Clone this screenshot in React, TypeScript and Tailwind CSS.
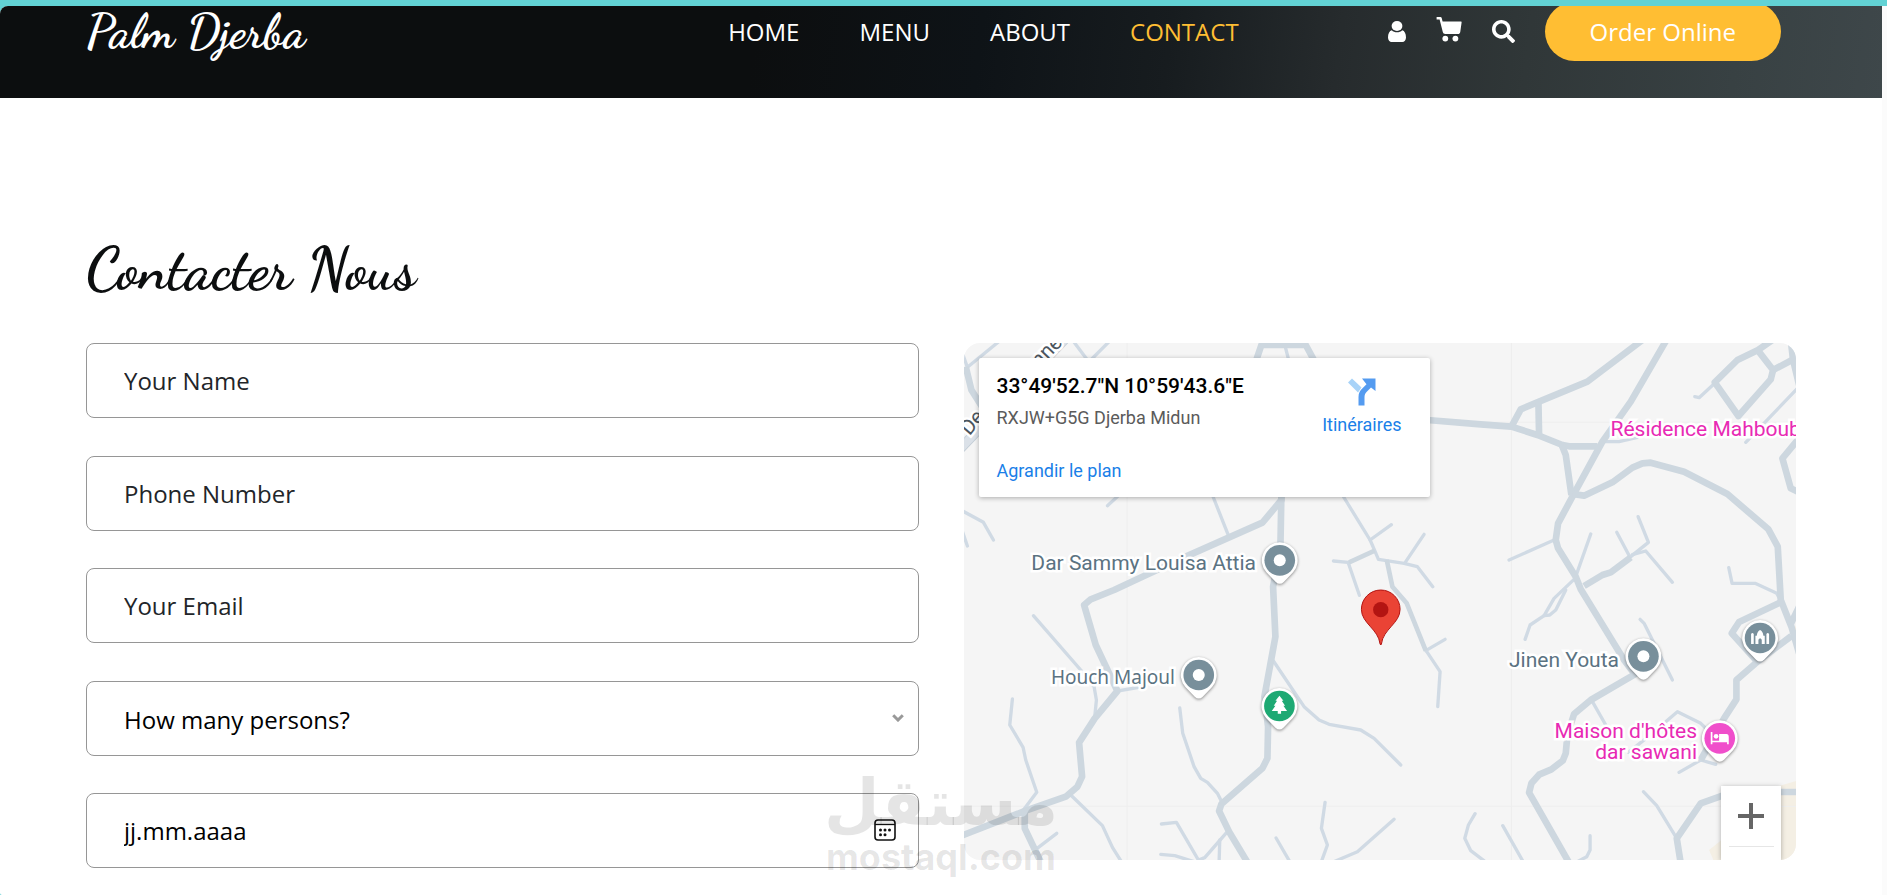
import { FaSearch } from "react-icons/fa";

const NAV = ["HOME", "MENU", "ABOUT", "CONTACT"];

const FIELD =
  "h-[75px] w-full rounded-lg border border-[#969696] bg-transparent px-[37px] text-2xl outline-none placeholder:text-[#222529]";

const MAJOR_ROADS = [
  "M915 95 L932 45 L1065 45 L1092 95",
  "M992 490 L992 510 L935 578 L705 680 L575 740 L490 780 L420 808 L400 825 L435 945 L500 1083 L432 1165 L385 1238 L394 1340 L380 1370 L345 1400 L225 1442 L20 1522",
  "M992 490 L989 650 L967 770 L974 920 L941 1100 L952 1190 L950 1285 L935 1315 L812 1422 L805 1443 L835 1505 L892 1600",
  "M1430 270 L1590 283 L1682 290 L1760 315 L1835 345 L1855 349 L1940 349",
  "M1682 290 L1710 238 L1765 215 L1910 155 L2075 30",
  "M1763 215 L1765 315",
  "M2150 25 L2040 215 L1955 335 L1865 500 L1822 580 L1815 630 L1822 655 L1875 740 L1890 778 L2020 990 L2052 1033 L1920 1110 L1870 1152 L1850 1215 L1845 1270 L1836 1292 L1802 1318 L1765 1334 L1742 1360 L1735 1388 L1856 1600",
  "M1833 345 L1845 375 L1862 495",
  "M1865 492 L1900 497 L1985 457 L2045 413 L2075 400 L2100 398 L2200 425 L2330 492 L2453 598 L2481 650 L2490 810 L2522 890 L2545 970",
  "M2465 30 L2422 60 L2360 90 L2292 157 L2363 258 L2460 148 L2467 120 L2422 62",
  "M2467 120 L2535 84",
  "M2520 30 L2527 90 L2545 165",
  "M2545 325 L2495 385 L2520 475 L2545 487",
  "M1900 768 L1955 735 L1980 727 L2040 682",
  "M2487 818 L2365 876 L2343 910 L2415 990",
  "M2522 918 L2420 995 L2357 1050 L2357 1108 L2320 1165 L2250 1290",
  "M2520 882 L2545 830",
  "M2545 1386 L2400 1386 L2315 1397 L2250 1420 L2178 1525 L2190 1600",
  "M45 110 L62 180 L100 240",
  "M222 1440 L222 1495 L272 1600",
];

const MINOR_ROADS = [
  "M150 30 L50 112 L35 70",
  "M365 30 L410 90",
  "M480 30 L420 90",
  "M1003 48 L1015 95",
  "M505 495 L470 527",
  "M785 495 L832 614",
  "M30 540 L98 577 L128 630",
  "M30 590 L50 648",
  "M248 857 L390 1020 L430 1070 L437 1110 L432 1160",
  "M500 1083 L560 1073",
  "M185 1107 L177 1185 L217 1252 L225 1290 L258 1387 L218 1440",
  "M262 1553 L318 1510",
  "M360 1395 L455 1487 L485 1552 L515 1600",
  "M687 1134 L696 1210 L730 1310 L750 1345 L770 1357 L800 1390 L815 1420",
  "M968 993 L1060 1130 L1105 1170 L1135 1183 L1230 1200 L1270 1225 L1350 1305",
  "M632 1482 L677 1477 L743 1590 L762 1583 L828 1507",
  "M807 1530 L805 1600",
  "M630 1573 L672 1577 L730 1595",
  "M976 1524 L1020 1600",
  "M1123 1417 L1112 1495 L1130 1545 L1110 1600",
  "M1150 1595 L1220 1565 L1330 1468",
  "M1175 495 L1258 630 L1272 662 L1283 688 L1360 700 L1400 710 L1446 770",
  "M1258 630 L1322 584",
  "M1148 693 L1192 697 L1226 796",
  "M1363 698 L1420 613",
  "M1425 962 L1483 928",
  "M1428 965 L1468 1025 L1461 1130",
  "M2292 160 L2245 203 L2232 200",
  "M2545 170 L2385 337",
  "M1960 335 L2005 335 L2060 322",
  "M1675 690 L1810 630",
  "M1920 612 L1873 745 L1810 805 L1780 857 L1738 885 L1723 928",
  "M1845 780 L1815 840 L1797 855 L1780 857",
  "M2040 680 L2093 637 L2062 560",
  "M2037 680 L1998 607",
  "M2045 674 L2085 663 L2165 757",
  "M2334 713 L2344 760 L2413 760 L2478 790 L2490 812",
  "M2068 868 L2080 880 L2165 1050",
  "M1925 1115 L1965 1185",
  "M2145 1175 L2180 1145 L2250 1180 L2270 1200",
  "M2033 1267 L2082 1228",
  "M2185 1327 L2250 1290 L2295 1303",
  "M2078 1385 L2118 1427 L2178 1525",
  "M1573 1451 L1553 1485 L1542 1525 L1560 1562 L1610 1600",
  "M1656 1487 L1720 1600",
  "M1918 1517 L1918 1560 L1908 1580 L1880 1595",
];

const LABEL =
  "absolute text-right leading-[21px] whitespace-nowrap [-webkit-text-stroke:5px_#ffffff] [paint-order:stroke_fill]";

function UserIcon() {
  return (
    <svg viewBox="0 0 18 21" className="h-[21px] w-[18px]" fill="currentColor" aria-hidden="true">
      <ellipse cx="9" cy="5" rx="5.4" ry="5" />
      <path d="M3.8 9.2C5 10.600 7 11.300 9 11.300s4-.7 5.200-2.100C16.600 9.800 18 12.600 18 16.500c0 2.700-1.600 4.500-3.700 4.500H3.700C1.600 21 0 19.200 0 16.500c0-3.900 1.400-6.700 3.800-7.300z" />
    </svg>
  );
}

function CartIcon() {
  return (
    <svg viewBox="0 0 26 25" className="-mt-1 h-[25px] w-[26px]" fill="currentColor" aria-hidden="true">
      <path d="M.6 0h3.900c.6 0 1 .3 1.200.9l.9 3.500h18.200c.6 0 .9.400.8 1l-1.300 9.300c-.2 1.500-1.200 2.300-2.500 2.300H9.300c-1.400 0-2.200-.7-2.500-2L3.600 2.500H.6z" />
      <circle cx="9.300" cy="21.600" r="2.900" />
      <circle cx="19.400" cy="21.600" r="2.900" />
    </svg>
  );
}

function Header() {
  return (
    <header className="overflow-hidden bg-[linear-gradient(97deg,#0c0e0f_40%,#0e1317_52%,#171c1f_62%,#262b2d_71%,#303738_81%,#384143_92%,#3e474a_100%)] text-white">
      <div className="mx-auto -mt-1 flex max-w-[1710px] items-center pr-[15px] pb-[37px]">
        <a href="#" className="h-[59px] font-['Dancing_Script',cursive] text-5xl leading-[59px] font-bold">
          Palm Djerba
        </a>
        <nav className="mr-[149px] ml-auto">
          <ul className="flex gap-[60px] text-2xl">
            {NAV.map((item) => (
              <li key={item}>
                <a href="#" className={item === "CONTACT" ? "text-[#ffbe33]" : ""}>
                  {item}
                </a>
              </li>
            ))}
          </ul>
        </nav>
        <div className="flex items-center gap-[30px]">
          <a href="#" aria-label="Account">
            <UserIcon />
          </a>
          <a href="#" aria-label="Cart">
            <CartIcon />
          </a>
          <button type="button" aria-label="Search">
            <FaSearch className="size-[23px]" />
          </button>
          <a href="#" className="flex h-[59px] items-center rounded-full bg-[#ffbe33] px-[45px] text-2xl">
            Order Online
          </a>
        </div>
      </div>
    </header>
  );
}

function BookingForm() {
  return (
    <form className="flex min-h-[525px] flex-col justify-between">
      <div>
        <label htmlFor="name" className="sr-only">Your Name</label>
        <input id="name" type="text" placeholder="Your Name" className={FIELD} />
      </div>
      <div>
        <label htmlFor="phone" className="sr-only">Phone Number</label>
        <input id="phone" type="text" placeholder="Phone Number" className={FIELD} />
      </div>
      <div>
        <label htmlFor="email" className="sr-only">Your Email</label>
        <input id="email" type="email" placeholder="Your Email" className={FIELD} />
      </div>
      <div className="relative">
        <label htmlFor="persons" className="sr-only">How many persons?</label>
        <select id="persons" defaultValue="" className={`${FIELD} appearance-none pt-1 text-black`}>
          <option value="" disabled>How many persons?</option>
          <option>2</option>
          <option>3</option>
          <option>4</option>
          <option>5</option>
        </select>
        <svg viewBox="0 0 12 8" className="pointer-events-none absolute top-[33px] right-[15px] h-2 w-3" aria-hidden="true">
          <path d="M1.200 1.200 L6 6 L10.800 1.200" fill="none" stroke="#999999" strokeWidth="3" />
        </svg>
      </div>
      <div className="relative">
        <label htmlFor="date" className="sr-only">Date</label>
        <input id="date" type="text" placeholder="jj.mm.aaaa" className={`${FIELD} placeholder:text-black`} />
        <button type="button" aria-label="Open calendar" className="absolute top-[26px] right-[23px]">
          <svg viewBox="0 0 22 22" className="size-[22px]" aria-hidden="true">
            <rect x="1" y="1" width="20" height="20" rx="3" fill="none" stroke="#111111" strokeWidth="1.600" />
            <path d="M1 5.500h20" stroke="#111111" strokeWidth="1.300" />
            <g fill="#111111">
              <circle cx="6.500" cy="11" r="1.500" />
              <circle cx="11" cy="11" r="1.500" />
              <circle cx="15.500" cy="11" r="1.500" />
              <circle cx="6.500" cy="15.700" r="1.500" />
              <circle cx="11" cy="15.700" r="1.500" />
            </g>
          </svg>
        </button>
      </div>
    </form>
  );
}

function Pin({ x, y, color, children }: { x: number; y: number; color: string; children: React.ReactNode }) {
  return (
    <g transform={`translate(${x} ${y})`}>
      <path
        d="M0 -54 A54 54 0 0 1 40 36 L12 65 Q0 76 -12 65 L-40 36 A54 54 0 0 1 0 -54Z"
        fill="#ffffff"
        className="[filter:drop-shadow(0_3px_4px_rgba(0,0,0,0.45))]"
      />
      <circle r="46" fill={color} />
      {children}
    </g>
  );
}

function MapDrawing() {
  return (
    <svg viewBox="39 39 2499 1551" preserveAspectRatio="xMidYMid slice" className="h-full w-full" aria-hidden="true">
      <path d="M2545 1350 L2485 1368 L2315 1368 L2315 1528 L2275 1560 L2292 1600 L2545 1600Z M2545 880 L2522 900 L2545 960Z" fill="#f4efe4" />
      <path d="M529 39V1590 M1682 39V1590 M39 277H2538 M39 1429H2538" stroke="#eeeeee" strokeWidth="3" />
      <g fill="none" stroke="#d0dae4" strokeWidth="10" strokeLinecap="round" strokeLinejoin="round">
        {MINOR_ROADS.map((d) => (
          <path key={d} d={d} />
        ))}
      </g>
      <g fill="none" stroke="#cdd7df" strokeWidth="20" strokeLinejoin="round">
        {MAJOR_ROADS.map((d) => (
          <path key={d} d={d} />
        ))}
        <path d="M1272 662 L1195 697 M1308 690 L1325 770 L1368 820 L1425 962" strokeWidth="14" />
      </g>
      <path d="M345 25 L20 365" stroke="#c3cdd6" strokeWidth="30" />
      <path d="M345 25 L20 365" stroke="#dbe1e8" strokeWidth="25" />

      <Pin x={987} y={691} color="#788f9b">
        <circle r="18" fill="#ffffff" />
      </Pin>
      <Pin x={744} y={1035} color="#788f9b">
        <circle r="18" fill="#ffffff" />
      </Pin>
      <Pin x={2078} y={979} color="#788f9b">
        <circle r="18" fill="#ffffff" />
      </Pin>
      <Pin x={986} y={1128} color="#1ea973">
        <path d="M0 -31 L12 -16 H7 L17 -1 H12 L23 15 H5 V23 H-5 V15 H-23 L-12 -1 H-17 L-7 -16 H-12Z" fill="#ffffff" />
      </Pin>
      <Pin x={2428} y={924} color="#788f9b">
        <path
          d="M-27 18V-12Q-23 -18 -19 -12V18Z M19 18V-12Q23 -18 27 -12V18Z M-14 18V-7H-10Q-8 -21 0 -24Q8 -21 10 -7H14V18H5V5Q0 -4 -5 5V18Z"
          fill="#ffffff"
        />
      </Pin>
      <Pin x={2307} y={1225} color="#f04ecb">
        <path d="M-27 -19h5V7H-2V-13H20Q27 -13 27 -4V18H22V12H-22V18H-27Z" fill="#ffffff" />
        <circle cx="-11" cy="-6" r="7" fill="#ffffff" />
      </Pin>

      <path
        d="M1290 780 C1322 780 1348 806 1348 838 C1348 880 1297 897 1292 942 Q1290 948 1288 942 C1283 897 1232 880 1232 838 C1232 806 1258 780 1290 780Z"
        fill="#ea4335"
        stroke="#b31412"
        strokeWidth="3"
      />
      <circle cx="1290" cy="839" r="23" fill="#b31412" />
    </svg>
  );
}

function MapPanel() {
  return (
    <div className="relative h-[517px] overflow-hidden rounded-2xl bg-[#f5f5f5] font-[Roboto,sans-serif] text-[21px]">
      <MapDrawing />

      <span className={`${LABEL} top-[2px] left-[56px] -rotate-[46deg] text-[#4b555e]`}>enne</span>
      <span className={`${LABEL} top-[69px] -left-1 -rotate-[50deg] text-[#4b555e]`}>De</span>
      <span className={`${LABEL} top-[210px] right-[540px] text-[#5b7382]`}>Dar Sammy Louisa Attia</span>
      <span className={`${LABEL} top-[324px] right-[621px] font-['Noto_Sans',sans-serif] text-[19px] text-[#5b7382]`}>
        Houch Majoul
      </span>
      <span className={`${LABEL} top-[307px] right-[177px] text-[#5b7382]`}>Jinen Youta</span>
      <span className={`${LABEL} top-[76px] left-[647px] text-[#e82ab4]`}>Résidence Mahbouba</span>
      <span className={`${LABEL} top-[378px] right-[99px] text-[#e82ab4]`}>
        Maison d'hôtes
        <br />
        dar sawani
      </span>

      <div className="absolute top-[15px] left-[15px] flex h-[139px] w-[451px] justify-between rounded-xs bg-white pt-4 pr-[28px] pl-[18px] text-lg leading-6 shadow-[0_1px_5px_rgba(0,0,0,0.3)]">
        <div>
          <p className="text-[21px] leading-6 font-medium text-black">33°49'52.7"N 10°59'43.6"E</p>
          <p className="mt-2 text-[#5b5b5b]">RXJW+G5G Djerba Midun</p>
          <a href="#" className="mt-[29px] block text-[#1a7fe8]">Agrandir le plan</a>
        </div>
        <a href="#" className="flex flex-col items-center pt-1 text-[#1a7fe8]">
          <svg viewBox="0 0 28 28" className="mb-[7px] size-[28px]" aria-hidden="true">
            <path d="M0 4.500 L4 .5 L13.500 9.500 L10 14.500Z" fill="#a8d3f8" />
            <path d="M10.500 27.500V19C10.500 15 12 12.600 14.500 10.200L18.500 6.200L14 .5H27.500V13L23 9.500L19 13.500C17.300 15.200 16.500 16.700 16.500 19V27.500Z" fill="#549bf0" />
          </svg>
          Itinéraires
        </a>
      </div>

      <div className="absolute right-[15px] bottom-0 flex h-[74px] w-[60px] flex-col items-center bg-white shadow-[0_1px_5px_rgba(0,0,0,0.3)]">
        <button type="button" aria-label="Zoom in" className="flex h-[60px] w-full items-center justify-center">
          <svg viewBox="0 0 26 26" className="size-[26px]" aria-hidden="true">
            <path d="M13 0V26 M0 13H26" stroke="#666666" strokeWidth="4" />
          </svg>
        </button>
        <div className="h-px w-[45px] bg-[#e6e6e6]" />
      </div>
    </div>
  );
}

function Watermark() {
  return (
    <div className="pointer-events-none absolute bottom-5 left-1/2 flex -translate-x-1/2 flex-col items-center font-bold text-black/10">
      <span lang="ar" className="font-['DejaVu_Sans',sans-serif] text-[64px] leading-[72px]">مستقل</span>
      <span className="font-[Inter,sans-serif] text-[36px] leading-[36px]">mostaql.com</span>
    </div>
  );
}

export default function App() {
  return (
    <div className="min-h-screen bg-[#62d2d4] pt-[6px] font-['Open_Sans',sans-serif]">
      <div className="relative min-h-[calc(100vh-6px)] overflow-hidden rounded-tl-lg rounded-bl-xs border-r-[5px] border-[#fbfbfb] bg-white">
        <Header />
        <main className="mx-auto max-w-[1710px] pt-[135px]">
          <h2 className="mb-[38px] font-['Dancing_Script',cursive] text-[60px] leading-[72px] font-bold text-[#0c0e0f]">
            Contacter Nous
          </h2>
          <div className="grid grid-cols-2 items-start gap-[45px]">
            <BookingForm />
            <MapPanel />
          </div>
        </main>
        <Watermark />
      </div>
    </div>
  );
}
